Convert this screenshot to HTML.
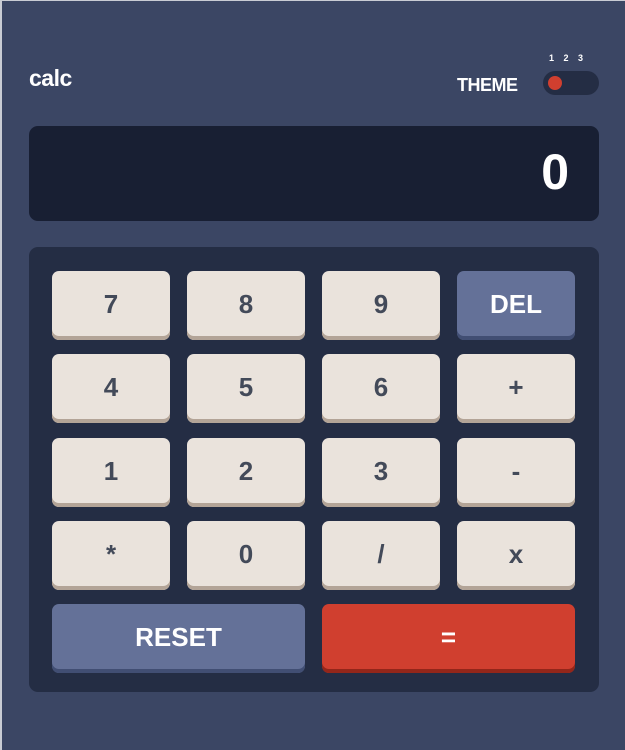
<!DOCTYPE html>
<html><head><style>
*{box-sizing:border-box;margin:0;padding:0}
body{width:625px;height:750px;background:#3b4664;font-family:"Liberation Sans",sans-serif;position:relative;overflow:hidden}
.edgeL{position:absolute;left:0;top:0;width:2px;height:750px;background:#c9ccd4}
.edgeT{position:absolute;left:0;top:0;width:625px;height:1px;background:#c9ccd4}
.logo{position:absolute;left:29px;top:65px;color:#fff;font-weight:bold;font-size:23px;letter-spacing:-0.5px}
.theme{position:absolute;left:457px;top:75px;color:#fff;font-weight:bold;font-size:18px;letter-spacing:-0.5px}
.nums{position:absolute;left:549px;top:53px;color:#fff;font-weight:bold;font-size:9px;word-spacing:7px}
.tog{position:absolute;left:543px;top:71px;width:56px;height:24px;border-radius:12px;background:#242d44}
.tog i{position:absolute;left:5px;top:5px;width:14px;height:14px;border-radius:50%;background:#d03f2f}
.disp{position:absolute;left:29px;top:126px;width:570px;height:95px;border-radius:9px;background:#181f33;color:#fff;font-weight:bold;font-size:50px;text-align:right;padding:17px 30px 0 0}
.pad{position:absolute;left:29px;top:247px;width:570px;height:445px;border-radius:9px;background:#242d44}
.k{position:absolute;width:118px;height:69px;border-radius:7px;background:#eae3dc;box-shadow:inset 0 -4px 0 #b3a497;color:#434a59;font-weight:bold;font-size:26px;text-align:center;line-height:66px}
.b{background:#647198;box-shadow:inset 0 -4px 0 #414e73;color:#fff}
.r{background:#d03f2f;box-shadow:inset 0 -4px 0 #93261a;color:#fff}
</style></head><body>
<div class="edgeL"></div><div class="edgeT"></div>
<div class="logo">calc</div>
<div class="theme">THEME</div>
<div class="nums">1 2 3</div>
<div class="tog"><i></i></div>
<div class="disp">0</div>
<div class="pad"></div>
<div class="k" style="left:52px;top:271px">7</div>
<div class="k" style="left:187px;top:271px">8</div>
<div class="k" style="left:322px;top:271px">9</div>
<div class="k b" style="left:457px;top:271px">DEL</div>
<div class="k" style="left:52px;top:354px">4</div>
<div class="k" style="left:187px;top:354px">5</div>
<div class="k" style="left:322px;top:354px">6</div>
<div class="k" style="left:457px;top:354px">+</div>
<div class="k" style="left:52px;top:438px">1</div>
<div class="k" style="left:187px;top:438px">2</div>
<div class="k" style="left:322px;top:438px">3</div>
<div class="k" style="left:457px;top:438px">-</div>
<div class="k" style="left:52px;top:521px">*</div>
<div class="k" style="left:187px;top:521px">0</div>
<div class="k" style="left:322px;top:521px">/</div>
<div class="k" style="left:457px;top:521px">x</div>
<div class="k b" style="left:52px;top:604px;width:253px">RESET</div>
<div class="k r" style="left:322px;top:604px;width:253px">=</div>
</body></html>
